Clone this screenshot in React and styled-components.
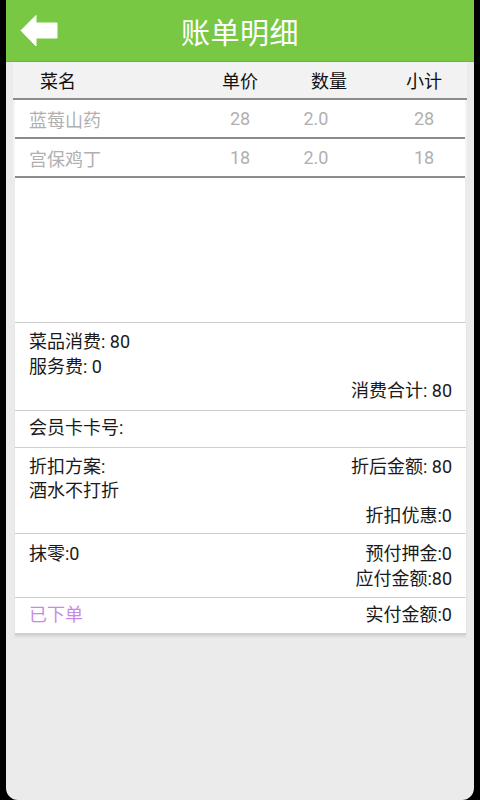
import React from "react";
import styled, { createGlobalStyle } from "styled-components";

const GlobalStyle = createGlobalStyle`
  html, body {
    margin: 0;
    padding: 0;
    background: #000;
  }
  * {
    box-sizing: border-box;
  }
`;

const items = [
  { name: "蓝莓山药", price: "28", qty: "2.0", total: "28" },
  { name: "宫保鸡丁", price: "18", qty: "2.0", total: "18" },
];

const App = () => {
  return (
    <>
      <GlobalStyle />
      <Screen>
        <TopBar>
          <BackButton aria-label="back">
            <svg width="38" height="32" viewBox="0 0 38 32">
              <path
                d="M1 15.5 L16 0.5 L16 8 L37 8 L37 23 L16 23 L16 31 Z"
                fill="#fff"
                stroke="#fff"
                strokeWidth="1"
                strokeLinejoin="round"
              />
            </svg>
          </BackButton>
          <Title>账单明细</Title>
        </TopBar>

        <Table>
          <HeadRow>
            <Cell $pad="25px">菜名</Cell>
            <Cell $center>单价</Cell>
            <Cell $center>数量</Cell>
            <Cell $center $shift="5px">小计</Cell>
          </HeadRow>
          {items.map((it) => (
            <ItemRow key={it.name}>
              <Cell $pad="14px">{it.name}</Cell>
              <Cell $center>{it.price}</Cell>
              <Cell $center $right="26px">{it.qty}</Cell>
              <Cell $center $shift="5px">{it.total}</Cell>
            </ItemRow>
          ))}
          <EmptySpace />
        </Table>

        <Summary>
          <Section $top="7px" $bottom="6px">
            <Line>菜品消费: 80</Line>
            <Line>服务费: 0</Line>
            <Line $end>消费合计: 80</Line>
          </Section>
          <Section $height="37px" $middle>
            <Line>会员卡卡号:</Line>
          </Section>
          <Section $top="7px" $bottom="5px">
            <Split>
              <span>折扣方案:</span>
              <span>折后金额: 80</span>
            </Split>
            <Line>酒水不打折</Line>
            <Line $end>折扣优惠:0</Line>
          </Section>
          <Section $top="8px" $bottom="6px">
            <Split>
              <span>抹零:0</span>
              <span>预付押金:0</span>
            </Split>
            <Line $end>应付金额:80</Line>
          </Section>
          <Section $height="38px" $middle $last>
            <Split>
              <Status>已下单</Status>
              <span>实付金额:0</span>
            </Split>
          </Section>
        </Summary>
      </Screen>
    </>
  );
};

const Screen = styled.div`
  margin: 0 6px;
  height: 800px;
  background: #ebebeb;
  border-radius: 0 0 12px 12px;
  overflow: hidden;
  font-family: Roboto, "Noto Sans CJK SC", sans-serif;
  font-size: 18px;
  color: #1a1a1a;
`;

const TopBar = styled.div`
  height: 62px;
  background: #78c843;
  border-bottom: 1px solid #6cb33b;
  display: flex;
  align-items: center;
  justify-content: center;
  position: relative;
`;

const BackButton = styled.div`
  position: absolute;
  left: 14px;
  top: 15px;
  display: flex;
`;

const Title = styled.h1`
  margin: 0;
  color: #fff;
  font-size: 29px;
  font-weight: 400;
  letter-spacing: 0.5px;
`;

const Table = styled.div`
  margin: 0 7px;
`;

const HeadRow = styled.div`
  display: grid;
  grid-template-columns: 185px 80px 98px 1fr;
  height: 38px;
  align-items: center;
  background: #f2f2f2;
  border-bottom: 2px solid #8c8c8c;
  color: #111;
  padding: 0 2px;
`;

const ItemRow = styled.div`
  display: grid;
  grid-template-columns: 185px 80px 98px 1fr;
  height: 39px;
  align-items: center;
  background: #fff;
  margin: 0 2px;
  border-bottom: 2px solid #8c8c8c;
  color: #b0b0b0;
  box-shadow: -2px 0 0 #f4f4f4, 2px 0 0 #f4f4f4;
`;

const Cell = styled.div`
  padding-left: ${(p) => p.$pad || p.$shift || "0"};
  padding-right: ${(p) => p.$right || "0"};
  text-align: ${(p) => (p.$center ? "center" : "left")};
  white-space: nowrap;
`;

const EmptySpace = styled.div`
  height: 144px;
  margin: 0 2px;
  background: #fff;
`;

const Summary = styled.div`
  margin: 0 8px 0 9px;
  background: #fff;
  box-shadow: 0 2px 2px rgba(0, 0, 0, 0.08);
`;

const Section = styled.div`
  border-top: 1px solid #cfcfcf;
  padding: ${(p) => p.$top || "0"} 14px ${(p) => p.$bottom || "0"};
  height: ${(p) => p.$height || "auto"};
  display: flex;
  flex-direction: column;
  justify-content: ${(p) => (p.$middle ? "center" : "flex-start")};
  border-bottom: ${(p) => (p.$last ? "2px solid #cfcfcf" : "0")};
`;

const Line = styled.div`
  line-height: 24.5px;
  text-align: ${(p) => (p.$end ? "right" : "left")};
`;

const Split = styled.div`
  display: flex;
  justify-content: space-between;
  line-height: 24.5px;
`;

const Status = styled.span`
  color: #c68ae6;
`;

export default App;
